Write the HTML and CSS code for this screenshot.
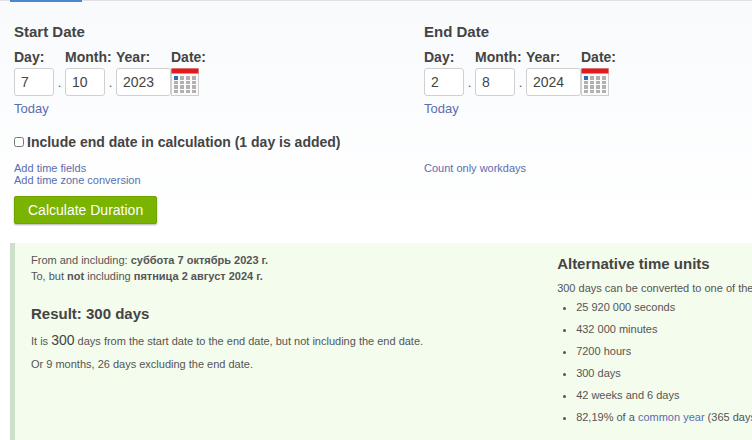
FILE: index.html
```html
<!DOCTYPE html>
<html lang="en">
<head>
    <meta charset="UTF-8">
    <meta name="viewport" content="width=device-width, initial-scale=1.0">
    <title>Date Duration Calculator</title>
    <link rel="stylesheet" href="styles.css">
</head>
<body>

    <div class="tabs">
        <div class="tab-active"></div>
    </div>

    <form class="date-form">
        <div class="columns">
            <section>
                <h2>Start Date</h2>
                <div class="date-row">
                    <div class="field">
                        <label for="d1">Day:</label>
                        <input type="text" id="d1" value="7">
                    </div>
                    <span class="dot">.</span>
                    <div class="field">
                        <label for="m1">Month:</label>
                        <input type="text" id="m1" value="10">
                    </div>
                    <span class="dot">.</span>
                    <div class="field year">
                        <label for="y1">Year:</label>
                        <input type="text" id="y1" value="2023">
                    </div>
                    <div class="field picker">
                        <label for="p1">Date:</label>
                        <button type="button" class="cal-btn" id="p1">
                            <svg width="28" height="28" viewBox="0 0 28 28">
                                <rect x="0.5" y="0.5" width="27" height="27" fill="#fbfbfb" stroke="#cfcfcf"/>
                                <rect x="0.5" y="0.5" width="27" height="5" fill="#e3191b"/>
                                <path fill="#b3b0b1" d="M9 8h4v4h-4zM15 8h4v4h-4zM21 8h4v4h-4zM3 13h4v3h-4zM9 13h4v3h-4zM15 13h4v3h-4zM21 13h4v3h-4zM3 17h4v4h-4zM9 17h4v4h-4zM15 17h4v4h-4zM21 17h4v4h-4zM3 22h4v3h-4zM9 22h4v3h-4zM15 22h4v3h-4zM21 22h4v3h-4z"/>
                                <rect x="3" y="8" width="4" height="4" fill="#2a6db0"/>
                            </svg>
                        </button>
                    </div>
                </div>
                <a class="today" href="#">Today</a>
            </section>

            <section>
                <h2>End Date</h2>
                <div class="date-row">
                    <div class="field">
                        <label for="d2">Day:</label>
                        <input type="text" id="d2" value="2">
                    </div>
                    <span class="dot">.</span>
                    <div class="field">
                        <label for="m2">Month:</label>
                        <input type="text" id="m2" value="8">
                    </div>
                    <span class="dot">.</span>
                    <div class="field year">
                        <label for="y2">Year:</label>
                        <input type="text" id="y2" value="2024">
                    </div>
                    <div class="field picker">
                        <label for="p2">Date:</label>
                        <button type="button" class="cal-btn" id="p2">
                            <svg width="28" height="28" viewBox="0 0 28 28">
                                <rect x="0.5" y="0.5" width="27" height="27" fill="#fbfbfb" stroke="#cfcfcf"/>
                                <rect x="0.5" y="0.5" width="27" height="5" fill="#e3191b"/>
                                <path fill="#b3b0b1" d="M9 8h4v4h-4zM15 8h4v4h-4zM21 8h4v4h-4zM3 13h4v3h-4zM9 13h4v3h-4zM15 13h4v3h-4zM21 13h4v3h-4zM3 17h4v4h-4zM9 17h4v4h-4zM15 17h4v4h-4zM21 17h4v4h-4zM3 22h4v3h-4zM9 22h4v3h-4zM15 22h4v3h-4zM21 22h4v3h-4z"/>
                                <rect x="3" y="8" width="4" height="4" fill="#2a6db0"/>
                            </svg>
                        </button>
                    </div>
                </div>
                <a class="today" href="#">Today</a>
            </section>
        </div>

        <div class="include">
            <input type="checkbox" id="include-end">
            <label for="include-end">Include end date in calculation (1 day is added)</label>
        </div>

        <div class="columns options">
            <div class="links">
                <a href="#">Add time fields</a>
                <a href="#">Add time zone conversion</a>
            </div>
            <div class="links">
                <a href="#">Count only workdays</a>
            </div>
        </div>

        <button type="submit" class="calc-btn">Calculate Duration</button>
    </form>

    <div class="result">
        <div class="summary">
            <p class="range">From and including: <b>суббота 7 октябрь 2023 г.</b><br>To, but <b>not</b> including <b>пятница 2 август 2024 г.</b></p>
            <h2>Result: 300 days</h2>
            <p>It is <span class="big">300</span> days from the start date to the end date, but not including the end date.</p>
            <p>Or 9 months, 26 days excluding the end date.</p>
        </div>
        <div class="units">
            <h2>Alternative time units</h2>
            <p>300 days can be converted to one of these units:</p>
            <ul>
                <li>25 920 000 seconds</li>
                <li>432 000 minutes</li>
                <li>7200 hours</li>
                <li>300 days</li>
                <li>42 weeks and 6 days</li>
                <li>82,19% of a <a href="#">common year</a> (365 days)</li>
            </ul>
        </div>
    </div>

</body>
</html>
```
FILE: styles.css
```css
body {
    margin: 0;
    font-family: "Liberation Sans", Arial, sans-serif;
    font-size: 11px;
    color: #555;
    background-color: #fff;
    overflow: hidden;
}

a {
    color: #5b6cb0;
    text-decoration: none;
}

a:hover {
    text-decoration: underline;
}

h2 {
    margin: 0;
    font-size: 15px;
    line-height: 18px;
    color: #444;
}

.tabs {
    padding-left: 10px;
    background-color: #f8fafc;
    border-top: 1px solid #dfe1e5;
}

.tab-active {
    width: 72px;
    height: 2px;
    margin-top: -1px;
    background-color: #4a86cf;
}

.date-form {
    padding: 21px 0 19px 14px;
    background: linear-gradient(#f8fafc, #fff 90%);
}

.columns {
    display: grid;
    grid-template-columns: 5fr 4fr;
}

.date-row {
    display: flex;
    margin-top: 8px;
}

.field {
    display: flex;
    flex-direction: column;
    width: 40px;
    white-space: nowrap;
}

.field label,
.include label {
    font-size: 14px;
    line-height: 16px;
    font-weight: bold;
    color: #444;
}

.field input {
    box-sizing: border-box;
    width: 100%;
    height: 28px;
    margin: 3px 0 0;
    padding: 0 6px;
    font-family: inherit;
    font-size: 14px;
    color: #444;
    background-color: #fff;
    border: 1px solid #d0d0d0;
    border-radius: 3px;
}

.year {
    width: 55px;
}

.picker {
    width: 28px;
}

.dot {
    width: 11px;
    align-self: flex-end;
    font-size: 13px;
    line-height: 26px;
    text-align: center;
}

.cal-btn {
    display: block;
    margin: 3px 0 0;
    padding: 0;
    border: none;
    background: none;
    cursor: pointer;
}

.cal-btn svg {
    display: block;
}

.today {
    display: inline-block;
    margin-top: 5px;
    font-size: 13px;
    line-height: 16px;
}

.include {
    display: flex;
    align-items: center;
    gap: 3px;
    margin-top: 17px;
}

.include input {
    width: 10px;
    height: 10px;
    margin: 0;
}

.options {
    margin-top: 12px;
}

.links {
    display: flex;
    flex-direction: column;
    line-height: 12px;
}

.calc-btn {
    display: block;
    height: 28px;
    margin-top: 10px;
    padding: 0 13px;
    font-family: inherit;
    font-size: 14px;
    color: #fff;
    background-color: #7ab300;
    border: 1px solid #6fa300;
    border-radius: 2px;
    box-shadow: 0 1px 2px rgba(0, 0, 0, 0.3);
    cursor: pointer;
}

.calc-btn:hover {
    background-color: #6fa300;
}

.result {
    display: grid;
    grid-template-columns: minmax(0, 27fr) minmax(0, 10fr);
    margin-left: 10px;
    padding: 9px 0 16px 16px;
    line-height: 16px;
    white-space: nowrap;
    background-color: #f3fced;
    border-left: 5px solid #cde0c9;
}

.result p {
    margin: 7px 0 0;
}

.result .range {
    margin: 0 0 21px;
}

.summary h2 {
    margin-bottom: 9px;
}

.big {
    font-size: 14px;
    color: #444;
}

.units h2 {
    margin-top: 3px;
}

.units ul {
    margin: 3px 0 0;
    padding-left: 19px;
}

.units li {
    margin-bottom: 6px;
}
```
